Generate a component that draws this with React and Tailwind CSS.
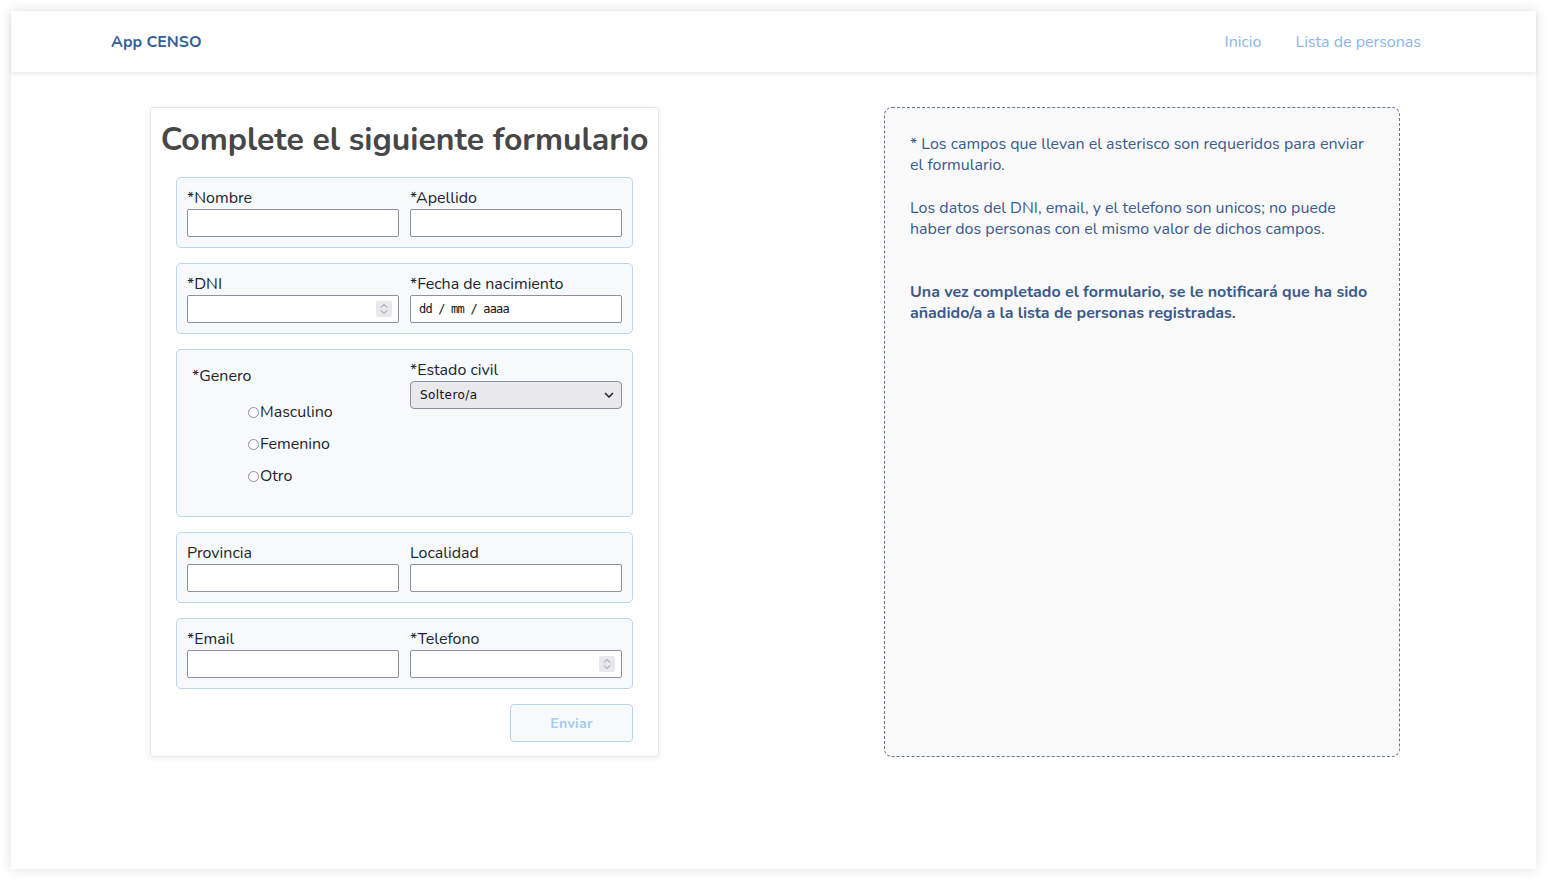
import React from 'react'

const font = { fontFamily: "'Nunito', 'Noto Sans', sans-serif" }

function Spinner() {
    return (
        <div className="w-[16px] h-[16px] bg-[#e9e9ed] rounded-[2px] flex items-center justify-center">
            <svg width="8" height="12" viewBox="0 0 8 12" fill="none" stroke="#8a8a8f" strokeWidth="1">
                <path d="M1 4.5 L4 1.5 L7 4.5" />
                <path d="M1 7.5 L4 10.5 L7 7.5" />
            </svg>
        </div>
    )
}

function Field({ label, children }) {
    return (
        <div className="flex flex-col w-[212px]">
            <label className="text-[16px] leading-[21px] text-[#212529]">{label}</label>
            {children}
        </div>
    )
}

function TextBox({ spinner }) {
    return (
        <div className="h-[28px] w-[212px] bg-white border border-[#8f8f9d] rounded-[2px] flex items-center justify-end pr-[6px]">
            {spinner && <Spinner />}
        </div>
    )
}

function Group({ children }) {
    return (
        <div className="w-[457px] border border-[#bcd6ee] bg-[#f6fafd] rounded-[5px] pt-[10px] pb-[10px] px-[10px] flex gap-[11px]">
            {children}
        </div>
    )
}

function Radio({ label }) {
    return (
        <label className="flex items-center text-[16px] leading-[22px] text-[#212529]">
            <span className="w-[11px] h-[11px] rounded-full border border-[#8f8f9d] bg-white mr-[1px]" />
            {label}
        </label>
    )
}

export default function App() {
    return (
        <div className="min-h-screen bg-white pt-[11px] pl-[11px] pr-[19px]" style={font}>
            <div className="h-[858px] bg-white shadow-[0_0_12px_rgba(0,0,0,0.12)]">
                {/* Navbar */}
                <nav className="h-[61px] flex items-center justify-between pl-[100px] pr-[115px] shadow-[0_2px_5px_rgba(0,0,0,0.09)]">
                    <span className="text-[16px] font-bold text-[#335f9c]">App CENSO</span>
                    <div className="flex gap-[34px] text-[16px] text-[#8db5e8]">
                        <span>Inicio</span>
                        <span>Lista de personas</span>
                    </div>
                </nav>

                <main className="flex pt-[35px] pl-[139px]">
                    {/* Form */}
                    <div className="w-[509px] h-[650px] border border-[#e4e9ee] rounded-[3px] shadow-[0_1px_6px_rgba(0,0,0,0.08)] flex flex-col items-center">
                        <h1 className="text-[32px] font-bold text-[#474747] leading-[40px] mt-[12px] mb-[17px]">
                            Complete el siguiente formulario
                        </h1>
                        <div className="flex flex-col gap-[15px]">
                            <Group>
                                <Field label="*Nombre"><TextBox /></Field>
                                <Field label="*Apellido"><TextBox /></Field>
                            </Group>
                            <Group>
                                <Field label="*DNI"><TextBox spinner /></Field>
                                <Field label="*Fecha de nacimiento">
                                    <div className="h-[28px] w-[212px] bg-white border border-[#8f8f9d] rounded-[2px] flex items-center pl-[8px] text-[12px] tracking-[-0.8px] text-[#111]" style={{ fontFamily: "'DejaVu Sans Mono', monospace" }}>
                                        dd / mm / aaaa
                                    </div>
                                </Field>
                            </Group>
                            <div className="w-[457px] h-[168px] border border-[#bcd6ee] bg-[#f6fafd] rounded-[5px] pt-[10px] px-[10px] flex gap-[11px]">
                                <div className="w-[212px] flex flex-col">
                                    <span className="text-[16px] leading-[22px] text-[#212529] pl-[5px] mt-[5px]">*Genero</span>
                                    <div className="flex flex-col gap-[10px] pl-[61px] mt-[14px]">
                                        <Radio label="Masculino" />
                                        <Radio label="Femenino" />
                                        <Radio label="Otro" />
                                    </div>
                                </div>
                                <Field label="*Estado civil">
                                    <div className="h-[28px] w-[212px] bg-[#e9e8ed] border border-[#8f8f9d] rounded-[4px] flex items-center justify-between pl-[9px] pr-[7px] text-[12px] tracking-[0.4px] text-[#111]" style={{ fontFamily: "'DejaVu Sans', sans-serif" }}>
                                        <span>Soltero/a</span>
                                        <svg width="10" height="6" viewBox="0 0 10 6" fill="none" stroke="#222" strokeWidth="1.5">
                                            <path d="M1 1 L5 5 L9 1" />
                                        </svg>
                                    </div>
                                </Field>
                            </div>
                            <Group>
                                <Field label="Provincia"><TextBox /></Field>
                                <Field label="Localidad"><TextBox /></Field>
                            </Group>
                            <Group>
                                <Field label="*Email"><TextBox /></Field>
                                <Field label="*Telefono"><TextBox spinner /></Field>
                            </Group>
                            <div className="flex justify-end">
                                <button className="w-[123px] h-[38px] bg-[#f8f9fa] border border-[#b5d5f3] rounded-[4px] text-[14px] font-bold text-[#a3cbef] tracking-[0.3px]">
                                    Enviar
                                </button>
                            </div>
                        </div>
                    </div>

                    {/* Info panel */}
                    <div className="ml-[225px] w-[516px] h-[650px] border border-dashed border-[#5a77a5] rounded-[8px] bg-[#f9f9f9] pl-[25px] pr-[28px] pt-[26px] text-[16px] leading-[21px] text-[#3b5a8c]">
                        <p>* Los campos que llevan el asterisco son requeridos para enviar el formulario.</p>
                        <p className="mt-[22px]">Los datos del DNI, email, y el telefono son unicos; no puede haber dos personas con el mismo valor de dichos campos.</p>
                        <p className="mt-[42px] font-bold">Una vez completado el formulario, se le notificará que ha sido añadido/a a la lista de personas registradas.</p>
                    </div>
                </main>
            </div>
        </div>
    )
}
